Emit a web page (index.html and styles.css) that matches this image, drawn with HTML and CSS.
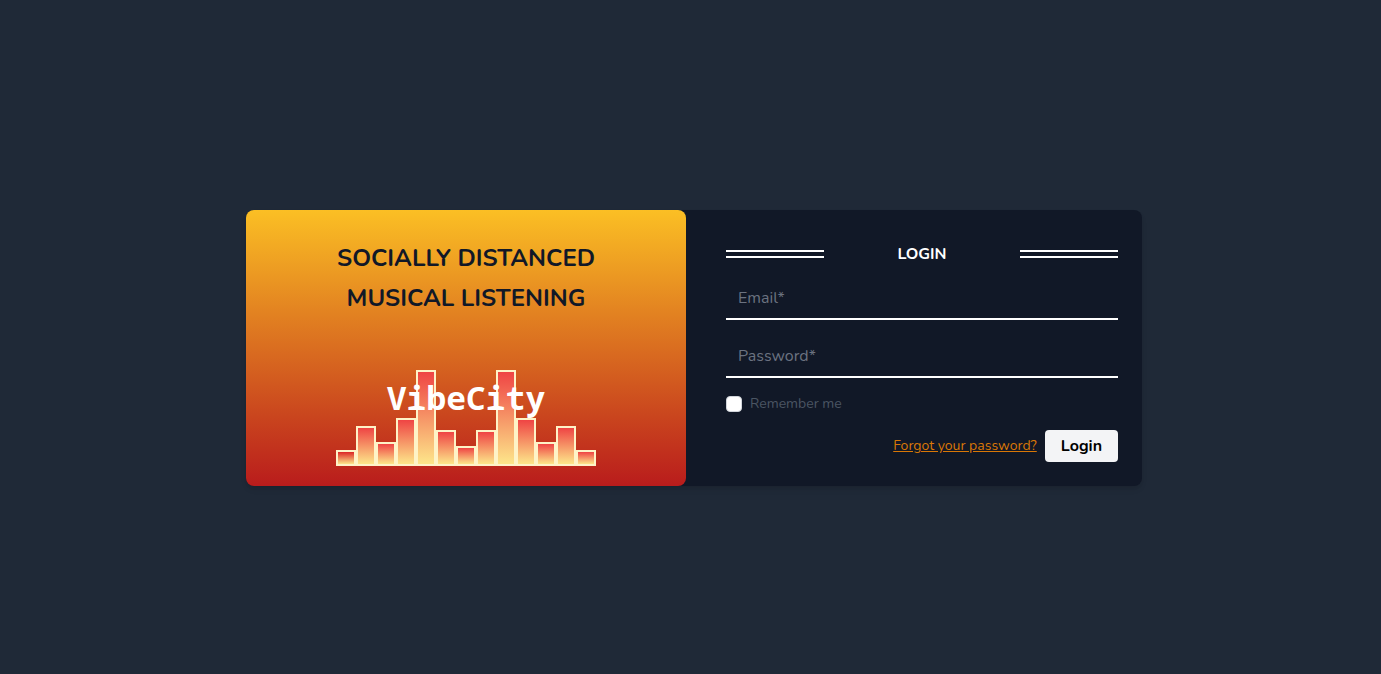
FILE: index.html
```html
<!DOCTYPE html>
<html lang="en">
<head>
<meta charset="utf-8">
<meta name="viewport" content="width=device-width, initial-scale=1">
<title>VibeCity</title>
<link rel="stylesheet" href="styles.css">
</head>
<body>
<main class="card">
  <section class="promo">
    <h1 class="tagline">SOCIALLY DISTANCED<br>MUSICAL LISTENING</h1>
    <div class="logo">
      <div class="bars" aria-hidden="true">
        <span class="bar h16 deep"></span><span class="bar h40"></span><span class="bar h24"></span><span class="bar h48"></span><span class="bar h96"></span><span class="bar h36"></span><span class="bar h20"></span><span class="bar h36"></span><span class="bar h96"></span><span class="bar h48"></span><span class="bar h24"></span><span class="bar h40"></span><span class="bar h16"></span>
      </div>
      <span class="brand">VibeCity</span>
    </div>
  </section>
  <form class="login">
    <div class="title-row">
      <span class="rule"></span>
      <h2 class="title">LOGIN</h2>
      <span class="rule"></span>
    </div>
    <input class="field" type="email" placeholder="Email*" aria-label="Email">
    <input class="field" type="password" placeholder="Password*" aria-label="Password">
    <label class="remember"><input class="check" type="checkbox"><span>Remember me</span></label>
    <div class="actions">
      <a class="forgot" href="#">Forgot your password?</a>
      <button class="submit" type="submit">Login</button>
    </div>
  </form>
</main>
</body>
</html>
```
FILE: styles.css
```css
* {
  box-sizing: border-box;
}

body {
  margin: 0;
  min-height: 100vh;
  padding: 22px 0 0 7px;
  display: flex;
  align-items: center;
  justify-content: center;
  background: #1f2937;
  font-family: Nunito, Lato, "Open Sans", sans-serif;
  font-size: 16px;
  line-height: 24px;
}

.card {
  width: 100%;
  max-width: 896px;
  display: grid;
  grid-template-columns: 1fr 1fr;
  gap: 16px;
  border-radius: 8px;
  background: #111827;
  box-shadow: 0 4px 6px -1px rgba(0, 0, 0, 0.1), 0 2px 4px -1px rgba(0, 0, 0, 0.06);
}

.promo {
  display: flex;
  flex-direction: column;
  align-items: center;
  justify-content: space-between;
  padding: 28px 20px 20px;
  border-radius: 8px;
  background: linear-gradient(to bottom, #fbbf24, #b91c1c);
}

.tagline {
  margin: 0;
  color: #111827;
  font-size: 24px;
  font-weight: 700;
  line-height: 40px;
  text-align: center;
}

.logo {
  position: relative;
}

.bars {
  display: flex;
  align-items: flex-end;
}

.bar {
  width: 20px;
  border: 2px solid #fef3c7;
  background: linear-gradient(to bottom, #ef4444, #fde68a);
}

.deep {
  background: linear-gradient(to bottom, #dc2626, #fde68a);
}

.h16 { height: 16px; }
.h20 { height: 20px; }
.h24 { height: 24px; }
.h36 { height: 36px; }
.h40 { height: 40px; }
.h48 { height: 48px; }
.h96 { height: 96px; }

.brand {
  position: absolute;
  top: 8px;
  left: 0;
  right: 0;
  color: #fff;
  font-family: "Noto Sans Mono", "Droid Sans Mono", "Liberation Mono", monospace;
  font-size: 33px;
  font-weight: 700;
  line-height: 40px;
  text-align: center;
}

.login {
  display: flex;
  flex-direction: column;
  padding: 32px 24px 24px 24px;
}

.title-row {
  display: grid;
  grid-template-columns: 1fr 2fr 1fr;
  align-items: center;
  margin-bottom: 12px;
}

.rule {
  height: 8px;
  border: solid #fff;
  border-width: 2px 0;
}

.title {
  margin: 0;
  color: #fff;
  font-size: 16px;
  font-weight: 700;
  line-height: 24px;
  text-align: center;
}

.field {
  width: 100%;
  height: 42px;
  margin: 0 0 16px;
  padding: 0 12px;
  border: 0;
  border-bottom: 2px solid #fff;
  border-radius: 0;
  outline: 0;
  background: transparent;
  color: #fff;
  font-family: inherit;
  font-size: 16px;
}

.field::placeholder {
  color: #6b7280;
  opacity: 1;
}

.remember {
  display: flex;
  align-items: center;
  gap: 8px;
  align-self: flex-start;
  color: #4b5563;
  font-size: 14px;
  line-height: 20px;
}

.check {
  appearance: none;
  width: 16px;
  height: 16px;
  margin: 0;
  border: 1px solid #d1d5db;
  border-radius: 4px;
  background: #fff;
}

.check:checked {
  background: #d97706;
}

.actions {
  display: flex;
  align-items: center;
  justify-content: flex-end;
  gap: 8px;
  margin-top: 16px;
}

.forgot {
  color: #d97706;
  font-size: 14px;
  line-height: 20px;
}

.submit {
  height: 32px;
  padding: 0 16px;
  border: 0;
  border-radius: 4px;
  background: #f3f4f6;
  color: #000;
  font-family: inherit;
  font-size: 16px;
  font-weight: 700;
}
```
